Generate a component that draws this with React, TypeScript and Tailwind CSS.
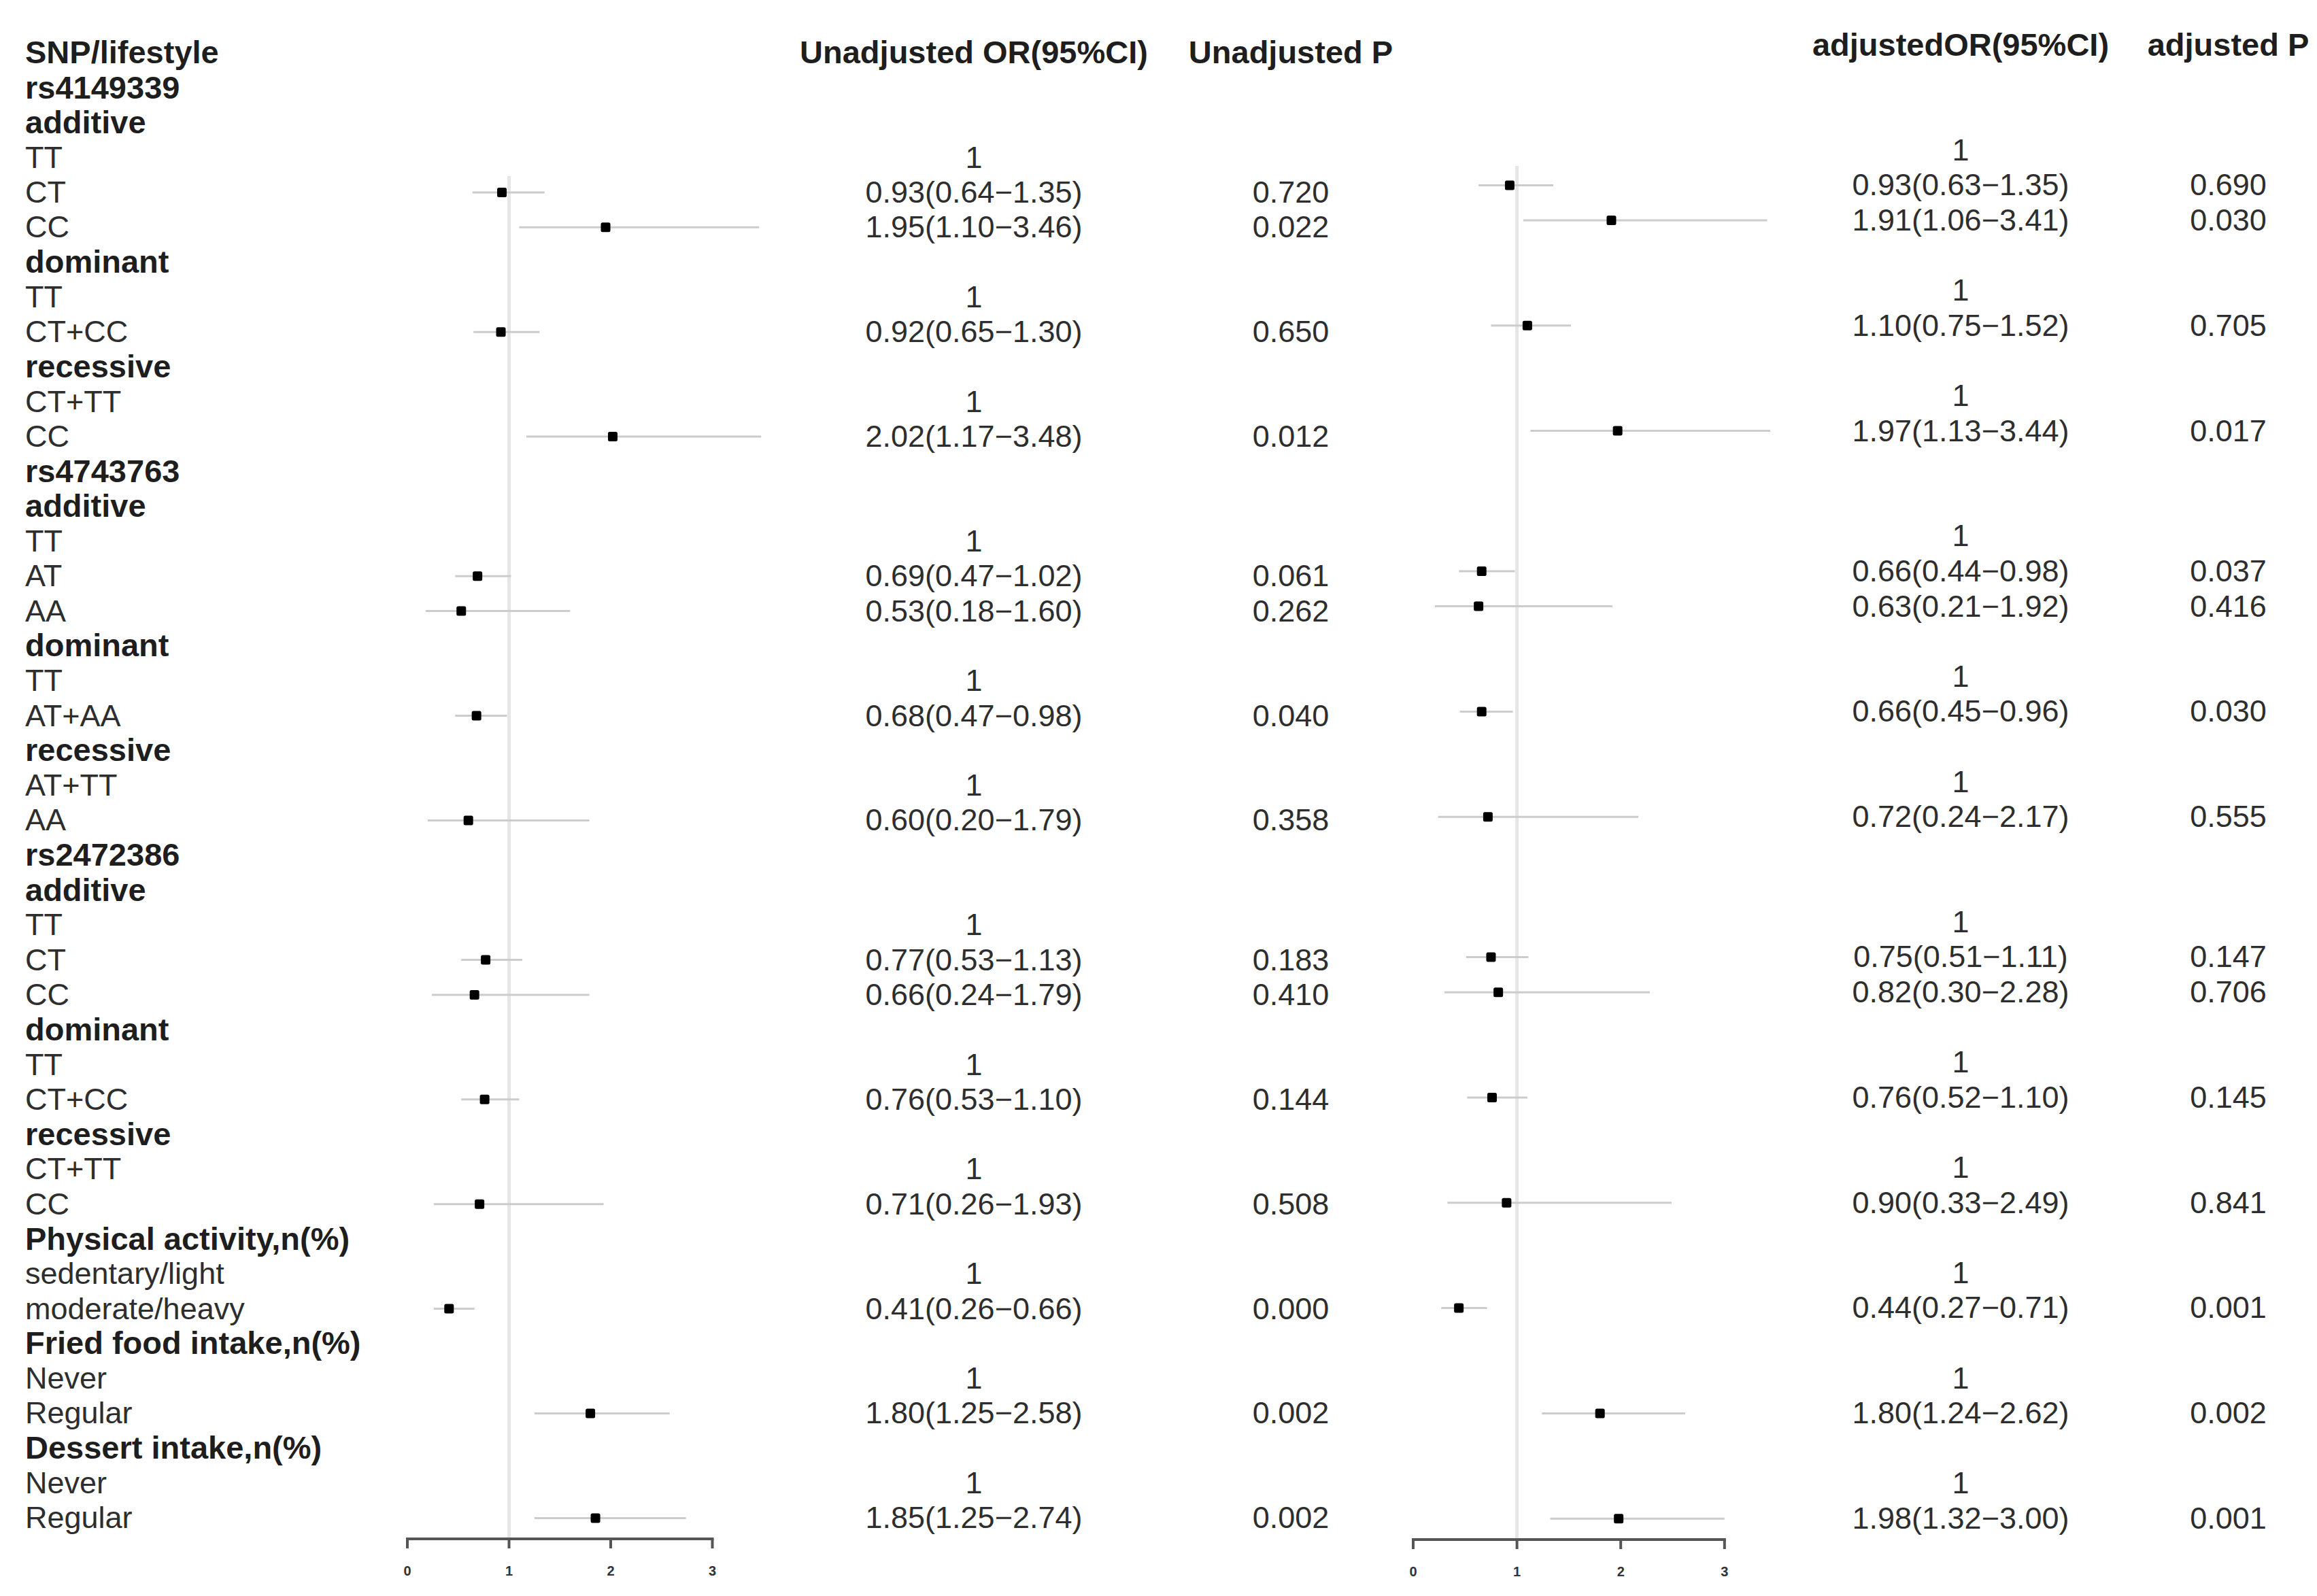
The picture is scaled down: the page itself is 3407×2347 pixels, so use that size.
import React from 'react';

type Row = {
  label: string;
  bold?: boolean;
  ref?: boolean;
  u?: [number, number, number, string];
  a?: [number, number, number, string];
};

const rows: Row[] = [
  { label: 'SNP/lifestyle', bold: true },
  { label: 'rs4149339', bold: true },
  { label: 'additive', bold: true },
  { label: 'TT', ref: true },
  { label: 'CT', u: [0.93, 0.64, 1.35, '0.720'], a: [0.93, 0.63, 1.35, '0.690'] },
  { label: 'CC', u: [1.95, 1.1, 3.46, '0.022'], a: [1.91, 1.06, 3.41, '0.030'] },
  { label: 'dominant', bold: true },
  { label: 'TT', ref: true },
  { label: 'CT+CC', u: [0.92, 0.65, 1.3, '0.650'], a: [1.1, 0.75, 1.52, '0.705'] },
  { label: 'recessive', bold: true },
  { label: 'CT+TT', ref: true },
  { label: 'CC', u: [2.02, 1.17, 3.48, '0.012'], a: [1.97, 1.13, 3.44, '0.017'] },
  { label: 'rs4743763', bold: true },
  { label: 'additive', bold: true },
  { label: 'TT', ref: true },
  { label: 'AT', u: [0.69, 0.47, 1.02, '0.061'], a: [0.66, 0.44, 0.98, '0.037'] },
  { label: 'AA', u: [0.53, 0.18, 1.6, '0.262'], a: [0.63, 0.21, 1.92, '0.416'] },
  { label: 'dominant', bold: true },
  { label: 'TT', ref: true },
  { label: 'AT+AA', u: [0.68, 0.47, 0.98, '0.040'], a: [0.66, 0.45, 0.96, '0.030'] },
  { label: 'recessive', bold: true },
  { label: 'AT+TT', ref: true },
  { label: 'AA', u: [0.6, 0.2, 1.79, '0.358'], a: [0.72, 0.24, 2.17, '0.555'] },
  { label: 'rs2472386', bold: true },
  { label: 'additive', bold: true },
  { label: 'TT', ref: true },
  { label: 'CT', u: [0.77, 0.53, 1.13, '0.183'], a: [0.75, 0.51, 1.11, '0.147'] },
  { label: 'CC', u: [0.66, 0.24, 1.79, '0.410'], a: [0.82, 0.3, 2.28, '0.706'] },
  { label: 'dominant', bold: true },
  { label: 'TT', ref: true },
  { label: 'CT+CC', u: [0.76, 0.53, 1.1, '0.144'], a: [0.76, 0.52, 1.1, '0.145'] },
  { label: 'recessive', bold: true },
  { label: 'CT+TT', ref: true },
  { label: 'CC', u: [0.71, 0.26, 1.93, '0.508'], a: [0.9, 0.33, 2.49, '0.841'] },
  { label: 'Physical activity,n(%)', bold: true },
  { label: 'sedentary/light', ref: true },
  { label: 'moderate/heavy', u: [0.41, 0.26, 0.66, '0.000'], a: [0.44, 0.27, 0.71, '0.001'] },
  { label: 'Fried food intake,n(%)', bold: true },
  { label: 'Never', ref: true },
  { label: 'Regular', u: [1.8, 1.25, 2.58, '0.002'], a: [1.8, 1.24, 2.62, '0.002'] },
  { label: 'Dessert intake,n(%)', bold: true },
  { label: 'Never', ref: true },
  { label: 'Regular', u: [1.85, 1.25, 2.74, '0.002'], a: [1.98, 1.32, 3.0, '0.001'] },
];

const fmt = (v: [number, number, number, string]) =>
  `${v[0].toFixed(2)}(${v[1].toFixed(2)}\u2212${v[2].toFixed(2)})`;

const font = { fontFamily: '"Liberation Sans", Arial, sans-serif' };

// forest plot drawing; all numbers in svg user units
const Forest = ({
  width,
  x0,
  unit,
  y0,
  step,
  lineTop,
  axisY,
  pick,
}: {
  width: number;
  x0: number;
  unit: number;
  y0: number;
  step: number;
  lineTop: number;
  axisY: number;
  pick: (r: Row) => [number, number, number, string] | undefined;
}) => {
  const x = (v: number) => x0 + v * unit;
  return (
    <svg width={width} height={2347} className="shrink-0 block">
      <line x1={x(1)} x2={x(1)} y1={lineTop} y2={axisY} stroke="#e6e6e6" strokeWidth={5} />
      {rows.map((r, i) => {
        const v = pick(r);
        if (!v) return null;
        const y = y0 + i * step;
        return (
          <g key={i}>
            <line x1={x(v[1])} x2={x(v[2])} y1={y} y2={y} stroke="#cccccc" strokeWidth={3} />
            <rect x={x(v[0]) - 7} y={y - 7} width={14} height={14} rx={2.5} fill="#000" />
          </g>
        );
      })}
      <line x1={x(0) - 2} x2={x(3) + 2} y1={axisY} y2={axisY} stroke="#555" strokeWidth={4} />
      {[0, 1, 2, 3].map((t) => (
        <g key={t}>
          <line x1={x(t)} x2={x(t)} y1={axisY} y2={axisY + 14} stroke="#555" strokeWidth={4} />
          <text
            x={x(t)}
            y={axisY + 54}
            textAnchor="middle"
            fontSize={20}
            fontWeight={700}
            fill="#333"
            style={font}
          >
            {t}
          </text>
        </g>
      ))}
    </svg>
  );
};

const Cell = ({ children, bold, h }: { children?: React.ReactNode; bold?: boolean; h: string }) => (
  <div
    className={`${h} flex items-center justify-center whitespace-nowrap ${
      bold ? 'text-[47px] font-bold text-[#1e1e1e]' : 'text-[45px] text-[#2e2e2e]'
    }`}
  >
    {children}
  </div>
);

export default function App() {
  return (
    <div className="w-[3407px] h-[2347px] bg-white flex items-start overflow-hidden" style={font}>
      {/* unadjusted panel */}
      <div className="w-[560px] shrink-0 pt-[52px] pl-[37px] flex flex-col">
        {rows.map((r, i) => (
          <div
            key={i}
            className={`h-[51.3px] flex items-center whitespace-nowrap ${
              r.bold ? 'text-[47px] font-bold text-[#1e1e1e]' : 'text-[45px] text-[#2e2e2e]'
            }`}
          >
            {r.label}
          </div>
        ))}
      </div>
      <Forest
        width={600}
        x0={39}
        unit={149.5}
        y0={77.8}
        step={51.3}
        lineTop={259}
        axisY={2263}
        pick={(r) => r.u}
      />
      <div className="w-[544px] shrink-0 pt-[52px] flex flex-col">
        <Cell h="h-[51.3px]" bold>
          Unadjusted OR(95%CI)
        </Cell>
        {rows.slice(1).map((r, i) => (
          <Cell key={i} h="h-[51.3px]">
            {r.ref ? '1' : r.u ? fmt(r.u) : ''}
          </Cell>
        ))}
      </div>
      <div className="w-[300px] ml-[44px] shrink-0 pt-[52px] flex flex-col">
        <Cell h="h-[51.3px]" bold>
          Unadjusted P
        </Cell>
        {rows.slice(1).map((r, i) => (
          <Cell key={i} h="h-[51.3px]">
            {r.u ? r.u[3] : ''}
          </Cell>
        ))}
      </div>

      {/* adjusted panel */}
      <Forest
        width={572}
        x0={30}
        unit={152.6}
        y0={66}
        step={51.6}
        lineTop={244}
        axisY={2264}
        pick={(r) => r.a}
      />
      <div className="w-[526px] shrink-0 pt-[40px] flex flex-col">
        <Cell h="h-[51.6px]" bold>
          adjustedOR(95%CI)
        </Cell>
        {rows.slice(1).map((r, i) => (
          <Cell key={i} h="h-[51.6px]">
            {r.ref ? '1' : r.a ? fmt(r.a) : ''}
          </Cell>
        ))}
      </div>
      <div className="w-[261px] shrink-0 pt-[40px] flex flex-col">
        <Cell h="h-[51.6px]" bold>
          adjusted P
        </Cell>
        {rows.slice(1).map((r, i) => (
          <Cell key={i} h="h-[51.6px]">
            {r.a ? r.a[3] : ''}
          </Cell>
        ))}
      </div>
    </div>
  );
}
